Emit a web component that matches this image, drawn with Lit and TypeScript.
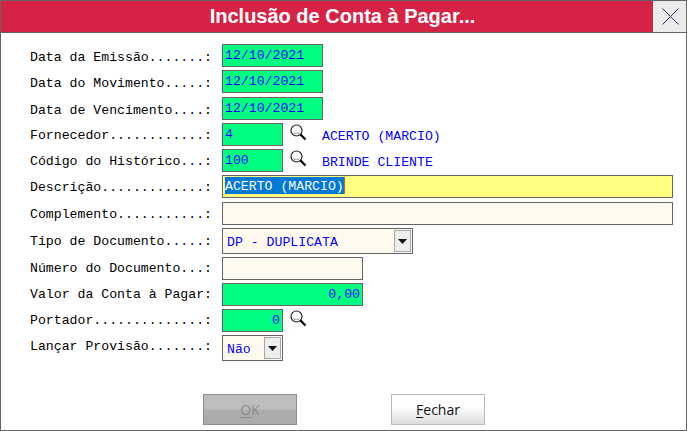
import { LitElement, html, css } from "lit";
import { customElement } from "lit/decorators.js";

const lens = html`<svg class="lens" width="20" height="20" viewBox="0 0 20 20" fill="none">
  <circle cx="7.5" cy="7.5" r="5.5" stroke="#222" stroke-width="1.2" fill="#fff"/>
  <path d="M4.5 9.5 Q7.5 12 10.5 9.5" stroke="#aaa" stroke-width="1.2"/>
  <path d="M11.5 11.5 L16.5 16.5" stroke="#000" stroke-width="2.2"/>
</svg>`;

const arrow = html`<span class="drop"><svg width="9" height="5" viewBox="0 0 9 5"><path d="M0 0H9L4.5 5Z" fill="#111"/></svg></span>`;

@customElement("app-root")
export class AppRoot extends LitElement {
  static styles = css`
    :host { display: block; width: 687px; height: 431px; box-sizing: border-box; border: 1px solid #646464; background: #fff; overflow: hidden; font-family: "Liberation Mono", monospace; font-size: 13.2px; color: #000; }
    .titlebar { display: flex; height: 31px; box-sizing: content-box; border-bottom: 1px solid #646464; }
    .title { flex: 1; background: #d62245; color: #fff; font: bold 20px/30px "Liberation Sans", Arial, sans-serif; text-align: center; padding-left: 31px; }
    .close { width: 32px; margin-left: 1px; background: #ebebeb; display: flex; align-items: center; justify-content: center; }
    .form { display: grid; grid-template-columns: 192px 1fr; grid-template-rows: 26px 27px 26px 26px 26px 27px 26px 29px 26px 26px 26px 59px; margin: 11px 0 0 29px; align-items: start; }
    .label { line-height: 27px; white-space: pre; }
    .label.up1 { line-height: 25px; }
    .label.up2 { line-height: 23px; }
    .line { display: flex; align-items: flex-start; }
    .f { box-sizing: border-box; height: 23px; border: 1px solid #646464; background: #fffaf0; color: #0000ff; line-height: 21px; padding: 0 2px; white-space: pre; display: flex; justify-content: space-between; }
    .g { background: #00ff80; }
    .y { background: #ffff80; }
    .w101 { width: 101px; } .w61 { width: 61px; } .w451 { width: 451px; } .w191 { width: 191px; } .w141 { width: 141px; }
    .right { justify-content: flex-end; padding-right: 2px; }
    .sel { background: #0078d7; color: #fff; box-shadow: 1px 0 0 #e2581c; height: 17px; line-height: 19px; margin-top: 1px; }
    .combo { height: 26px; padding: 0 1px 0 4px; align-items: center; }
    .combo span:first-child { line-height: 28px; height: 24px; }
    .drop { box-sizing: border-box; width: 17px; height: 22px; border: 1px solid #a8a8a8; background: #eee; display: flex; align-items: center; justify-content: center; }
    .lens { margin: 0 0 0 6px; display: block; }
    .desc { color: #0000ff; margin-left: 13px; line-height: 27px; }
    .actions { display: flex; gap: 94px; margin-left: 202px; }
    .btn { box-sizing: border-box; width: 94px; height: 31px; font: 14px/29px "Open Sans", "Noto Sans", sans-serif; text-align: center; border: 1px solid #bbb; color: #111; background: linear-gradient(#fff 0%, #fff 40%, #dcdcdc 100%); }
    .btn.off { border-color: #8c8c8c; color: #8a8a8a; background: linear-gradient(#bdbdbd 0%, #bdbdbd 48%, #aeaeae 52%, #aaa 100%); }
    u { text-underline-offset: 2px; }
  `;

  render() {
    return html`
      <div class="titlebar">
        <div class="title">Inclusão de Conta à Pagar...</div>
        <div class="close"><svg width="17" height="17" viewBox="0 0 17 17"><path d="M.5.5 16.5 16.5M16.5.5.5 16.5" stroke="#1d3560" stroke-width="1" fill="none"/></svg></div>
      </div>
      <div class="form">
        <div class="label">Data da Emissão.......:</div><div class="f g w101">12/10/2021</div>
        <div class="label">Data do Movimento.....:</div><div class="f g w101">12/10/2021</div>
        <div class="label">Data de Vencimento....:</div><div class="f g w101">12/10/2021</div>
        <div class="label up1">Fornecedor............:</div><div class="line"><div class="f g w61">4</div>${lens}<span class="desc">ACERTO (MARCIO)</span></div>
        <div class="label up1">Código do Histórico...:</div><div class="line"><div class="f g w61">100</div>${lens}<span class="desc">BRINDE CLIENTE</span></div>
        <div class="label up1">Descrição.............:</div><div class="f y w451"><span class="sel">ACERTO (MARCIO)</span></div>
        <div class="label up1">Complemento...........:</div><div class="f w451"></div>
        <div class="label">Tipo de Documento.....:</div><div class="f combo w191"><span>DP - DUPLICATA</span>${arrow}</div>
        <div class="label up2">Número do Documento...:</div><div class="f w141"></div>
        <div class="label up2">Valor da Conta à Pagar:</div><div class="f g right w141">0,00</div>
        <div class="label up2">Portador..............:</div><div class="line"><div class="f g right w61">0</div>${lens}</div>
        <div class="label up2">Lançar Provisão.......:</div><div class="f combo w61"><span>Não</span>${arrow}</div>
      </div>
      <div class="actions">
        <div class="btn off"><u>O</u>K</div>
        <div class="btn"><u>F</u>echar</div>
      </div>
    `;
  }
}
